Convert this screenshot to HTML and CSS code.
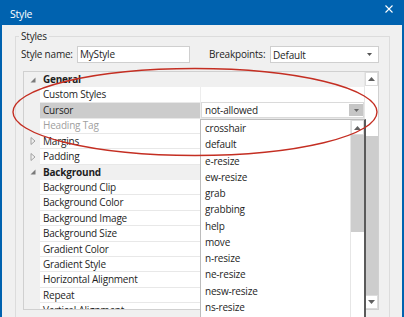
FILE: index.html
```html
<!DOCTYPE html>
<html>
<head>
<meta charset="utf-8">
<title>Style</title>
<link rel="stylesheet" href="styles.css">
</head>
<body>
<div class="window">
  <div class="titlebar">
    <span class="title">Style</span>
    <span class="close"><svg width="8" height="8" viewBox="0 0 8 8"><path d="M0.5 0.5L7.5 7.5M7.5 0.5L0.5 7.5" stroke="#fff" stroke-width="1.1"/></svg></span>
  </div>
  <fieldset class="group">
    <legend>Styles</legend>
    <div class="form-row">
      <span class="lbl lbl-name">Style name:</span>
      <div class="input">MyStyle</div>
      <span class="lbl lbl-bp">Breakpoints:</span>
      <div class="select"><span>Default</span><svg class="caret" width="5" height="3" viewBox="0 0 5 3"><path d="M0 0H5L2.5 3Z" fill="#555"/></svg></div>
    </div>
    <div class="grid">
      <div class="rows">
        <div class="row cat"><span class="gut"><svg width="6" height="6" viewBox="0 0 6 6"><path d="M5.5 0.5V5.5H0.5Z" fill="#7a7a7a"/></svg></span><span class="name">General</span></div>
        <div class="row"><span class="gut"></span><span class="name">Custom Styles</span><span class="val"></span></div>
        <div class="row sel"><span class="gut"></span><span class="name">Cursor</span><span class="val"><span class="combo"><span class="combo-text">not-allowed</span><span class="combo-btn"><svg width="5" height="3" viewBox="0 0 5 3"><path d="M0 0H5L2.5 3Z" fill="#666"/></svg></span></span></span></div>
        <div class="row dis"><span class="gut"></span><span class="name">Heading Tag</span><span class="val"></span></div>
        <div class="row"><span class="gut"><svg width="6" height="8" viewBox="0 0 6 8"><path d="M1 0.5L5 4L1 7.5Z" fill="none" stroke="#9a9a9a" stroke-width="0.9"/></svg></span><span class="name">Margins</span><span class="val"></span></div>
        <div class="row"><span class="gut"><svg width="6" height="8" viewBox="0 0 6 8"><path d="M1 0.5L5 4L1 7.5Z" fill="none" stroke="#9a9a9a" stroke-width="0.9"/></svg></span><span class="name">Padding</span><span class="val"></span></div>
        <div class="row cat"><span class="gut"><svg width="6" height="6" viewBox="0 0 6 6"><path d="M5.5 0.5V5.5H0.5Z" fill="#7a7a7a"/></svg></span><span class="name">Background</span></div>
        <div class="row"><span class="gut"></span><span class="name">Background Clip</span><span class="val"></span></div>
        <div class="row"><span class="gut"></span><span class="name">Background Color</span><span class="val"></span></div>
        <div class="row"><span class="gut"></span><span class="name">Background Image</span><span class="val"></span></div>
        <div class="row"><span class="gut"></span><span class="name">Background Size</span><span class="val"></span></div>
        <div class="row"><span class="gut"></span><span class="name">Gradient Color</span><span class="val"></span></div>
        <div class="row"><span class="gut"></span><span class="name">Gradient Style</span><span class="val"></span></div>
        <div class="row"><span class="gut"></span><span class="name">Horizontal Alignment</span><span class="val"></span></div>
        <div class="row"><span class="gut"></span><span class="name">Repeat</span><span class="val"></span></div>
        <div class="row"><span class="gut"></span><span class="name">Vertical Alignment</span><span class="val"></span></div>
      </div>
      <div class="vscroll">
        <span class="sbtn"><svg width="7" height="4" viewBox="0 0 7 4"><path d="M0 4H7L3.5 0Z" fill="#606060"/></svg></span>
        <span class="track-top"></span>
        <span class="thumb"></span>
        <span class="sbtn"><svg width="7" height="4" viewBox="0 0 7 4"><path d="M0 0H7L3.5 4Z" fill="#606060"/></svg></span>
      </div>
    </div>
  </fieldset>

  <div class="popup">
    <ul class="options">
      <li>crosshair</li>
      <li>default</li>
      <li>e-resize</li>
      <li>ew-resize</li>
      <li>grab</li>
      <li>grabbing</li>
      <li>help</li>
      <li>move</li>
      <li>n-resize</li>
      <li>ne-resize</li>
      <li>nesw-resize</li>
      <li>ns-resize</li>
    </ul>
    <div class="pscroll">
      <span class="pbtn"><svg width="7" height="4" viewBox="0 0 7 4"><path d="M0 4H7L3.5 0Z" fill="#606060"/></svg></span>
      <span class="pthumb"></span>
      <span class="ptrack"></span>
    </div>
  </div>

  <svg class="annot" width="404" height="317" viewBox="0 0 404 317"><ellipse cx="195" cy="112" rx="182" ry="43.5" fill="none" stroke="#c42e22" stroke-width="1.4"/></svg>
</div>
</body>
</html>
```

FILE: styles.css
```css
* { box-sizing: border-box; }
html, body {
  margin: 0;
  padding: 0;
  width: 404px;
  height: 317px;
  overflow: hidden;
  background: #f0f0f0;
}
body {
  font-family: "Open Sans", "Noto Sans", sans-serif;
  font-size: 10px;
  letter-spacing: -0.2px;
  color: #1e1e1e;
}
.window {
  position: relative;
  width: 404px;
  height: 317px;
  overflow: hidden;
  background: #f0f0f0;
  border-left: 2px solid #0062af;
  border-right: 2px solid #0062af;
}
.titlebar {
  height: 25px;
  background: #0062af;
  display: flex;
  align-items: center;
  justify-content: space-between;
  padding: 0 9px 0 8px;
  color: #fff;
}
.title {
  font-size: 10.5px;
  padding-top: 2px;
}
.close {
  display: flex;
  width: 8px;
  height: 8px;
  margin-top: -7px;
}
.group {
  margin: 4px 12px 0 13px;
  padding: 3px 5px 0 5px;
  border: 1px solid #dcdcdc;
  height: 320px;
}
.group legend {
  padding: 0 2px;
  margin-left: -2px;
  line-height: 14px;
  color: #1e1e1e;
}
.form-row {
  display: flex;
  align-items: center;
  height: 17px;
}
.lbl { line-height: 17px; }
.lbl-name { width: 56px; }
.lbl-bp { width: 61px; margin-left: 19px; }
.input, .select {
  height: 17px;
  background: #fff;
  border: 1px solid #cfcfcf;
  line-height: 14px;
  padding-left: 2px;
}
.input { width: 113px; }
.select {
  width: 109px;
  display: flex;
  justify-content: space-between;
  align-items: center;
  padding-right: 6px;
}
.grid {
  margin: 8px 0 0 2px;
  width: 356px;
  height: 239px;
  border: 1px solid #d0d0d0;
  display: flex;
  background: #fff;
}
.rows {
  width: 340px;
  height: 237px;
  overflow: hidden;
}
.row {
  display: grid;
  grid-template-columns: 16px 161px 163px;
  height: 15.43px;
}
.gut {
  background: #f0f0f0;
  display: flex;
  align-items: center;
  justify-content: center;
  padding-left: 1px;
}
.name {
  padding-left: 3px;
  line-height: 14px;
  border-bottom: 1px solid #e8e8e8;
  border-right: 1px solid #ededed;
  white-space: nowrap;
}
.val {
  border-bottom: 1px solid #e8e8e8;
  position: relative;
}
.cat { background: #f0f0f0; }
.cat .name {
  grid-column: 2 / 4;
  font-weight: 700;
  border: none;
  background: #f0f0f0;
}
.sel .name { background: #cccccc; }
.dis .name { color: #a0a0a0; }
.combo {
  display: flex;
  height: 16px;
  border: 1px solid #dadada;
  background: #fff;
  margin-top: -0.5px;
}
.combo-text {
  flex: 1;
  padding-left: 3px;
  line-height: 14px;
}
.combo-btn {
  width: 14px;
  background: #c6c6c6;
  display: flex;
  align-items: center;
  justify-content: center;
  margin: 1px 0 1px 0;
}
.vscroll {
  width: 14px;
  height: 237px;
  display: flex;
  flex-direction: column;
  background: #fff;
  border-left: 1px solid #e6e6e6;
}
.sbtn {
  height: 14px;
  flex: none;
  display: flex;
  align-items: center;
  justify-content: center;
  background: #fff;
  border: 1px solid #dcdcdc;
}
.track-top { height: 50px; flex: none; }
.thumb { flex: 1; background: #cdcdcd; }
.popup {
  position: absolute;
  left: 198px;
  top: 119px;
  width: 166px;
  height: 210px;
  background: #fff;
  border: 1px solid #bcbcbc;
  border-right: 2px solid #5a5a5a;
  display: flex;
}
.options {
  list-style: none;
  margin: 0;
  padding: 0;
  flex: 1;
}
.options li {
  height: 16.27px;
  line-height: 16px;
  padding-left: 4px;
  color: #1e1e1e;
}
.pscroll {
  width: 14px;
  display: flex;
  flex-direction: column;
  border-left: 1px solid #e6e6e6;
}
.pbtn {
  height: 15px;
  flex: none;
  display: flex;
  align-items: center;
  justify-content: center;
  background: #fff;
  border: 1px solid #dcdcdc;
}
.pthumb { height: 97px; flex: none; background: #cdcdcd; }
.ptrack { flex: 1; background: #fff; }
.annot {
  position: absolute;
  left: -2px;
  top: 0;
  pointer-events: none;
}
```
